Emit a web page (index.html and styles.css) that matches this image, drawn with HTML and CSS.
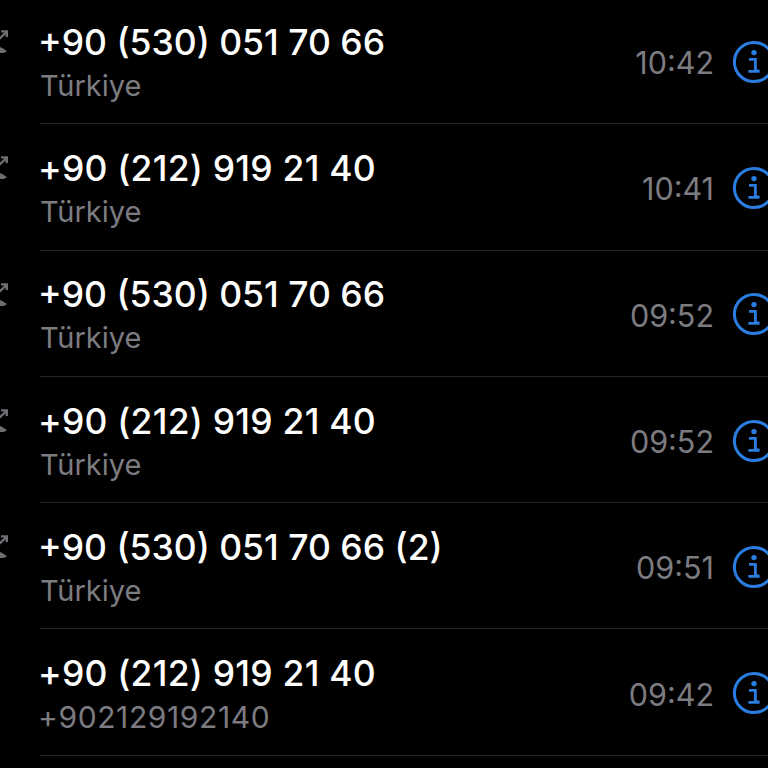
FILE: index.html
```html
<!DOCTYPE html>
<html lang="tr">
<head>
<meta charset="utf-8">
<title>Recents</title>
<link rel="stylesheet" href="styles.css">
</head>
<body>
<svg class="defs" width="0" height="0" aria-hidden="true">
  <symbol id="out" viewBox="0 0 8 24">
    <path d="M-4 13 L6.5 3 M1 2.4 H6.8 V8" fill="none" stroke="#6e6e72" stroke-width="2.4"/>
    <path d="M-6 13 C-3 15 -1 17 0 18 C2 19 5 20.5 7 22 C4 25 -1 25 -4 22 Z" fill="#6e6e72"/>
  </symbol>
  <symbol id="info" viewBox="0 0 44 44">
    <circle cx="22" cy="22" r="19.6" fill="none" stroke="#2a7de1" stroke-width="3"/>
    <circle cx="22" cy="12.6" r="2.7" fill="#2a7de1"/>
    <path d="M17 19.4 H23.4 V31 H27.4 M16.4 31.4 H27.6" fill="none" stroke="#2a7de1" stroke-width="2.8"/>
  </symbol>
</svg>
<main class="list">
  <div class="row">
    <svg class="dir"><use href="#out"/></svg>
    <div class="body">
      <div class="main"><div class="name">+90 (530) 051 70 66</div><div class="sub">Türkiye</div></div>
      <div class="time">10:42</div>
      <svg class="info"><use href="#info"/></svg>
    </div>
  </div>
  <div class="row">
    <svg class="dir"><use href="#out"/></svg>
    <div class="body">
      <div class="main"><div class="name ones">+90 (212) 919 21 40</div><div class="sub">Türkiye</div></div>
      <div class="time">10:41</div>
      <svg class="info"><use href="#info"/></svg>
    </div>
  </div>
  <div class="row">
    <svg class="dir"><use href="#out"/></svg>
    <div class="body">
      <div class="main"><div class="name">+90 (530) 051 70 66</div><div class="sub">Türkiye</div></div>
      <div class="time">09:52</div>
      <svg class="info"><use href="#info"/></svg>
    </div>
  </div>
  <div class="row">
    <svg class="dir"><use href="#out"/></svg>
    <div class="body">
      <div class="main"><div class="name ones">+90 (212) 919 21 40</div><div class="sub">Türkiye</div></div>
      <div class="time">09:52</div>
      <svg class="info"><use href="#info"/></svg>
    </div>
  </div>
  <div class="row">
    <svg class="dir"><use href="#out"/></svg>
    <div class="body">
      <div class="main"><div class="name">+90 (530) 051 70 66 (2)</div><div class="sub">Türkiye</div></div>
      <div class="time">09:51</div>
      <svg class="info"><use href="#info"/></svg>
    </div>
  </div>
  <div class="row">
    <div class="dir"></div>
    <div class="body">
      <div class="main"><div class="name ones">+90 (212) 919 21 40</div><div class="sub number">+902129192140</div></div>
      <div class="time">09:42</div>
      <svg class="info"><use href="#info"/></svg>
    </div>
  </div>
</main>
</body>
</html>
```
FILE: styles.css
```css
html, body {
  margin: 0;
  padding: 0;
  width: 768px;
  height: 768px;
  overflow: hidden;
  background: #000;
}
body {
  font-family: "Inter", "Liberation Sans", sans-serif;
}
.defs {
  display: block;
  height: 0;
}
.list {
  margin-top: -2px;
  display: flex;
  flex-direction: column;
}
.row {
  display: flex;
  height: 126.3px;
  align-items: stretch;
}
.dir {
  width: 8px;
  height: 24px;
  margin-top: 31px;
  flex: none;
}
.body {
  margin-left: 32px;
  flex: 1;
  min-width: 0;
  display: flex;
  align-items: center;
  border-bottom: 1px solid #262628;
  box-sizing: border-box;
}
.main {
  flex: 1;
  padding-top: 7px;
}
.name {
  color: #fff;
  font-size: 35.5px;
  font-weight: 500;
  line-height: 43px;
  margin-left: -2px;
  white-space: nowrap;
}
.ones {
  letter-spacing: 0.22px;
}
.sub {
  color: #7c7c80;
  font-size: 29px;
  line-height: 44px;
  white-space: nowrap;
}
.number {
  font-size: 30px;
  letter-spacing: 0.6px;
  margin-left: -2px;
}
.time {
  color: #7c7c80;
  font-size: 30.5px;
  margin-right: 18px;
  margin-top: 4px;
}
.info {
  width: 44px;
  height: 44px;
  flex: none;
  margin-right: -8px;
  margin-top: 2px;
}
```
